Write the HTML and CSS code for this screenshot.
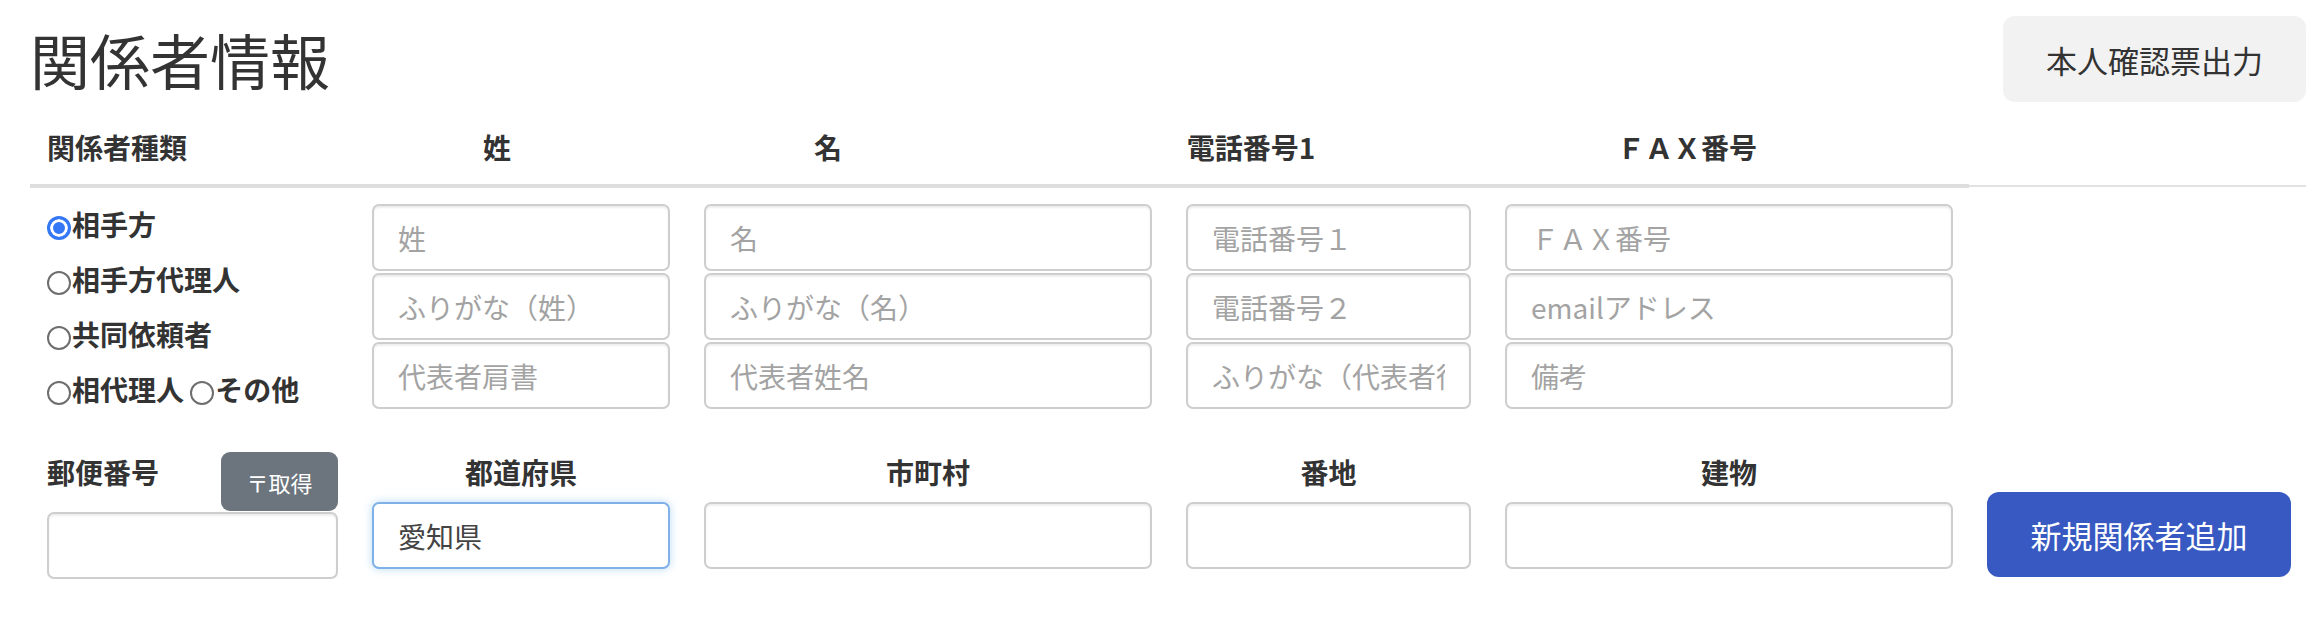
FILE: index.html
```html
<!DOCTYPE html>
<html lang="ja">
<head>
    <meta charset="UTF-8">
    <title>関係者情報</title>
    <link rel="stylesheet" href="styles.css">
</head>
<body>
    <div class="page">
        <div class="topbar">
            <h1 class="title">関係者情報</h1>
            <button class="btn btn-light">本人確認票出力</button>
        </div>

        <div class="thead">
            <div class="thead-cells">
                <div class="th th-kind">関係者種類</div>
                <div class="th th-sei">姓</div>
                <div class="th th-mei">名</div>
                <div class="th th-tel">電話番号1</div>
                <div class="th th-fax">ＦＡＸ番号</div>
                <div class="th th-end"></div>
            </div>
            <div class="thead-rest"></div>
        </div>

        <div class="grid">
            <!-- row 1 -->
            <div class="kinds">
                <label class="kind"><input type="radio" name="kind" checked>相手方</label>
                <label class="kind"><input type="radio" name="kind">相手方代理人</label>
                <label class="kind"><input type="radio" name="kind">共同依頼者</label>
                <label class="kind"><input type="radio" name="kind">相代理人 <input type="radio" name="kind">その他</label>
            </div>
            <div class="stack">
                <input class="form-control" placeholder="姓">
                <input class="form-control" placeholder="ふりがな（姓）">
                <input class="form-control" placeholder="代表者肩書">
            </div>
            <div class="stack">
                <input class="form-control" placeholder="名">
                <input class="form-control" placeholder="ふりがな（名）">
                <input class="form-control" placeholder="代表者姓名">
            </div>
            <div class="stack">
                <input class="form-control" placeholder="電話番号１">
                <input class="form-control" placeholder="電話番号２">
                <input class="form-control" placeholder="ふりがな（代表者役職）">
            </div>
            <div class="stack">
                <input class="form-control" placeholder="ＦＡＸ番号">
                <input class="form-control" placeholder="emailアドレス">
                <input class="form-control" placeholder="備考">
            </div>
            <div></div>

            <!-- row 2 -->
            <div class="zip">
                <div class="zip-head">
                    <span class="label">郵便番号</span>
                    <button class="btn btn-secondary">〒取得</button>
                </div>
                <input class="form-control zip-input">
            </div>
            <div class="field">
                <div class="label">都道府県</div>
                <input class="form-control focused" value="愛知県">
            </div>
            <div class="field">
                <div class="label">市町村</div>
                <input class="form-control">
            </div>
            <div class="field">
                <div class="label">番地</div>
                <input class="form-control">
            </div>
            <div class="field">
                <div class="label">建物</div>
                <input class="form-control">
            </div>
            <div class="add">
                <button class="btn btn-primary">新規関係者追加</button>
            </div>
        </div>
    </div>
</body>
</html>
```

FILE: styles.css
```css
body {
    margin: 0;
    background: #fff;
    color: #333;
    font-family: "Noto Sans CJK JP", "Noto Sans", sans-serif;
}
.page {
    padding: 0 12px 0 30px;
}
.topbar {
    display: flex;
    justify-content: space-between;
    align-items: center;
    padding-top: 16px;
}
.title {
    margin: 0;
    font-size: 60px;
    font-weight: 400;
    line-height: 72px;
    color: #333;
}
.btn {
    font-family: inherit;
    border: none;
    cursor: pointer;
}
.btn-light {
    width: 303px;
    height: 86px;
    background: #f2f2f2;
    color: #333;
    font-size: 31px;
    border-radius: 12px;
}
.btn-secondary {
    width: 117px;
    height: 59px;
    background: #6c757d;
    color: #fff;
    font-size: 22px;
    border-radius: 9px;
}
.btn-primary {
    width: 100%;
    height: 85px;
    background: #3759c1;
    color: #fff;
    font-size: 31px;
    border-radius: 12px;
}

/* table header */
.thead {
    display: flex;
    margin-top: 25px;
}
.thead-cells {
    display: flex;
    border-bottom: 4px solid #dedede;
}
.th {
    font-size: 28px;
    font-weight: 700;
    line-height: 40px;
    padding-bottom: 17px;
    text-align: center;
}
.th-kind { width: 325px; padding-left: 17px; text-align: left; }
.th-sei { width: 250px; }
.th-mei { width: 412px; }
.th-tel { width: 434px; }
.th-fax { width: 438px; }
.th-end { width: 63px; }
.thead-rest {
    flex: 1;
    margin-bottom: 1px;
    border-bottom: 2px solid #e2e2e2;
}

/* form grid */
.grid {
    display: grid;
    grid-template-columns: 291px 298px 448px 285px 448px 304px;
    column-gap: 34px;
    row-gap: 35px;
    margin: 16px 0 0 17px;
    align-items: start;
}
.kinds {
    margin-top: -7px;
}
.kind {
    display: block;
    font-size: 28px;
    font-weight: 700;
    line-height: 55px;
    white-space: nowrap;
}
.kind input {
    appearance: none;
    -webkit-appearance: none;
    box-sizing: border-box;
    width: 24px;
    height: 24px;
    margin: 0 1px 0 0;
    border: 2px solid #6e6e6e;
    border-radius: 50%;
    vertical-align: -4px;
    background: #fff;
}
.kind input:checked {
    border: 3px solid #3478f6;
    background: #3478f6;
    box-shadow: inset 0 0 0 3px #fff;
}
.stack {
    display: flex;
    flex-direction: column;
    gap: 2px;
}
.form-control {
    display: block;
    box-sizing: border-box;
    width: 100%;
    height: 67px;
    padding: 0 24px;
    border: 2px solid #cecece;
    border-radius: 7px;
    box-shadow: inset 0 2px 2px rgba(0,0,0,0.07);
    background: #fff;
    color: #444;
    font-family: inherit;
    font-size: 28px;
    outline: none;
}
.form-control::placeholder { color: #a3a3a3; }
.form-control.focused {
    border-color: #7fb0e8;
    box-shadow: 0 0 8px rgba(102,175,233,0.45);
}
.label {
    font-size: 28px;
    font-weight: 700;
    line-height: 40px;
}
.zip-head {
    display: flex;
    justify-content: space-between;
    align-items: flex-start;
}
.zip-input { margin-top: 1px; }
.field .label {
    text-align: center;
    margin-bottom: 10px;
}
.add { padding-top: 40px; }
```
